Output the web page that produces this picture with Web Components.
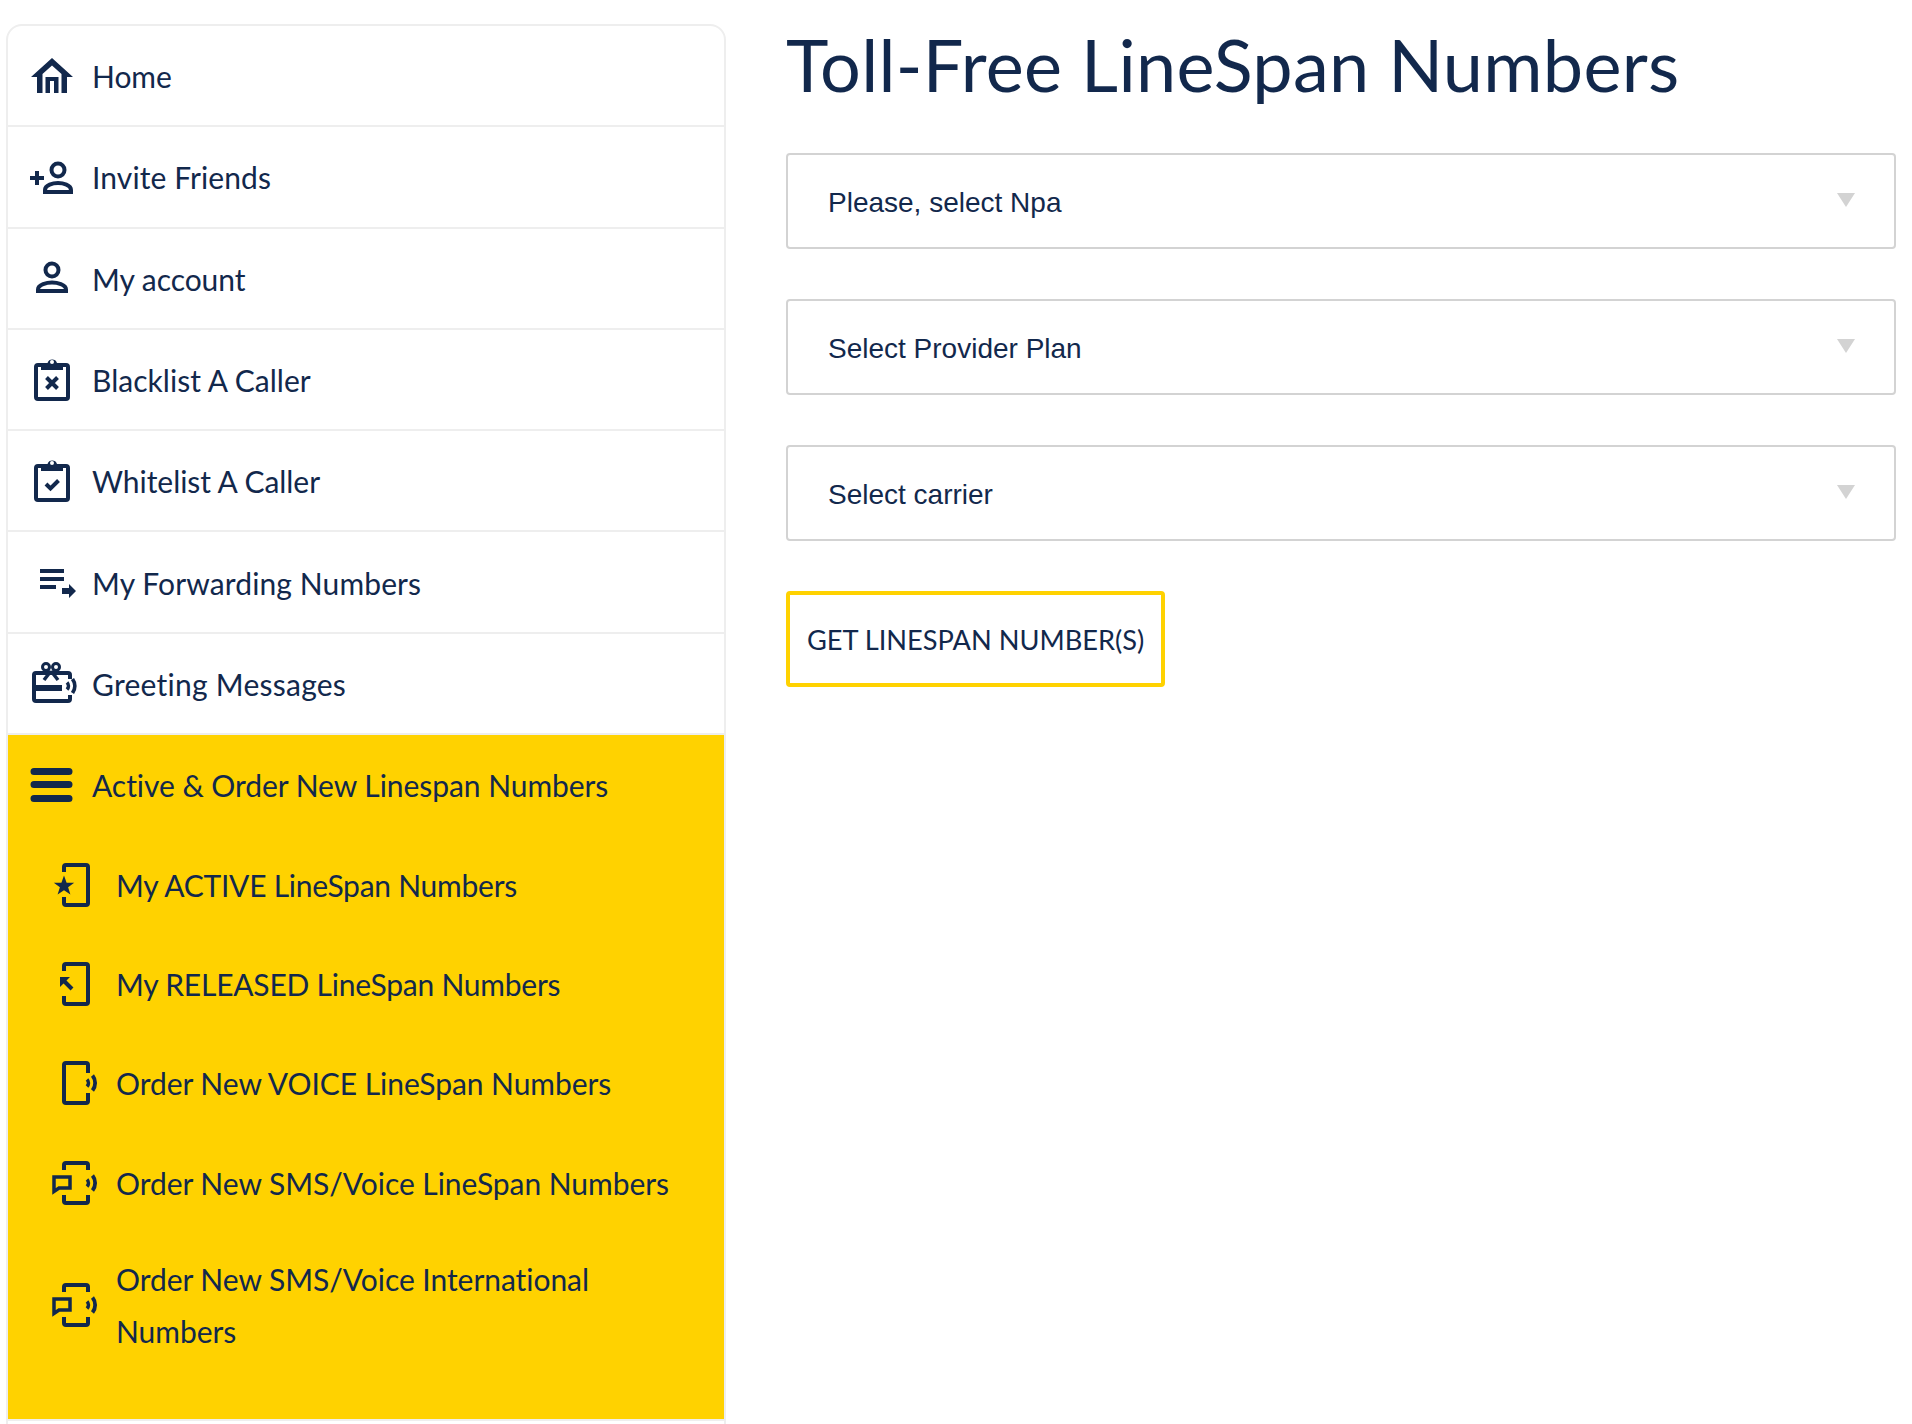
<!DOCTYPE html>
<html lang="en">
<head>
<meta charset="utf-8">
<title>Toll-Free LineSpan Numbers</title>
<style>
html, body { margin: 0; height: 1424px; overflow: hidden; background: #fff; }
body { font-family: Lato, "Open Sans", sans-serif; color: #12284c; }
</style>
</head>
<body>
<page-shell>
  <nav-menu slot="side">
    <nav-item icon="home">Home</nav-item>
    <nav-item icon="invite" style="--track: .1px">Invite Friends</nav-item>
    <nav-item icon="account">My account</nav-item>
    <nav-item icon="blacklist" style="--track: .03px">Blacklist A Caller</nav-item>
    <nav-item icon="whitelist">Whitelist A Caller</nav-item>
    <nav-item icon="forward" style="--track: .12px">My Forwarding Numbers</nav-item>
    <nav-item icon="greeting" style="--track: .25px">Greeting Messages</nav-item>
    <nav-group>
      <nav-item slot="head" icon="menu" plain>Active &amp; Order New Linespan Numbers</nav-item>
      <sub-item icon="active" style="--track: -.25px">My ACTIVE LineSpan Numbers</sub-item>
      <sub-item icon="released" style="--track: -.22px">My RELEASED LineSpan Numbers</sub-item>
      <sub-item icon="voice">Order New VOICE LineSpan Numbers</sub-item>
      <sub-item icon="sms">Order New SMS/Voice LineSpan Numbers</sub-item>
      <sub-item icon="sms" tall>Order New SMS/Voice International Numbers</sub-item>
    </nav-group>
  </nav-menu>
  <number-form>
    <span slot="title">Toll-Free LineSpan Numbers</span>
    <select-box>Please, select Npa</select-box>
    <select-box>Select Provider Plan</select-box>
    <select-box>Select carrier</select-box>
    <outline-button slot="action">GET LINESPAN NUMBER(S)</outline-button>
  </number-form>
</page-shell>

<script>
// all icons are drawn on a 48 x 48 box, 1 unit = 1 reference pixel
const tabletStubs = 'M14 11V6a2 2 0 0 1 2-2h20a2 2 0 0 1 2 2v36a2 2 0 0 1-2 2H16a2 2 0 0 1-2-2v-6';
const tabletVoice = 'M14 11V6a2 2 0 0 1 2-2h20a2 2 0 0 1 2 2v5M14 36v6a2 2 0 0 0 2 2h20a2 2 0 0 0 2-2v-6';
const waves = '<path d="M37 20.5a5 5 0 0 1 0 7" stroke-width="3.6"/><path d="M42.500 16.500a12 12 0 0 1 0 15" stroke-width="3.8"/>';
const clipboard = `<rect x="8" y="9" width="32" height="34" rx="2"/>
  <path fill="currentColor" stroke="none" d="M13 7h6.500a5 5 0 0 1 9.500 0H35v7H13z"/>
  <circle cx="24" cy="6" r="2" fill="#fff" stroke="none"/>`;
const icons = {
  home: '<path fill="currentColor" stroke="none" fill-rule="evenodd" d="M24 6L3 25h6v16h30V25h6zM24 13.500l-9.500 8.500v19h3V25h13v16h3V22zM22 29h4v12h-4z"/>',
  invite: '<path d="M2 25h14M9 18v14" /><circle cx="30" cy="17" r="6.500"/><path d="M17 39v-2c0-5 8-7 13-7s13 2 13 7v2z"/>',
  account: '<circle cx="24" cy="16" r="6.500"/><path d="M10 37v-1.500c0-5 9-7 14-7s14 2 14 7V37z"/>',
  blacklist: clipboard + '<path d="M18.500 21.500l11 11M29.500 21.500l-11 11"/>',
  whitelist: clipboard + '<path d="M18 27l4.500 4.500L30.500 23.500"/>',
  forward: '<path fill="currentColor" stroke="none" d="M12 11h24v4H12zM12 19h24v4H12zM12 27h16v4H12zM34 30h7v-4l7 7-7 7v-4h-7z"/>',
  greeting: `<path d="M42 20v-4a2 2 0 0 0-2-2H8a2 2 0 0 0-2 2v24a2 2 0 0 0 2 2h32a2 2 0 0 0 2-2v-4"/>
    <path fill="currentColor" stroke="none" d="M4 26h30v6H4z"/>
    <path d="M23 12l-7 9M23 12l7 9" stroke-width="3.500"/>
    <circle cx="18" cy="8" r="3.500" stroke-width="3"/><circle cx="28" cy="8" r="3.500" stroke-width="3"/>
    <path d="M39 23.500a5 5 0 0 1 0 7" stroke-width="3.600"/><path d="M44.500 20a12 12 0 0 1 0 14" stroke-width="3.800"/>`,
  menu: '<path fill="currentColor" stroke="none" d="M6 7h35a2 2 0 0 1 0 7H6a2 2 0 0 1 0-7zM6 20h35a2 2 0 0 1 0 7H6a2 2 0 0 1 0-7zM6 34h35a2 2 0 0 1 0 7H6a2 2 0 0 1 0-7z"/>',
  active: `<path d="${tabletStubs}"/><path fill="currentColor" stroke="none" d="M14 14.500l2.600 7.200h7.600l-6.100 4.600 2.300 7.300-6.400-4.400-6.400 4.400 2.300-7.300-6.100-4.600h7.600z"/>`,
  released: `<path d="${tabletStubs}"/><path fill="currentColor" stroke="none" d="M10 17h10L10 27z"/><path d="M14 21l8 8"/>`,
  voice: `<path d="M38 14V6a2 2 0 0 0-2-2H16a2 2 0 0 0-2 2v36a2 2 0 0 0 2 2h20a2 2 0 0 0 2-2v-8"/>${waves}`,
  sms: `<path d="${tabletVoice}"/><path stroke-width="3.500" d="M4 18h16v11H9l-5 3.500z"/>${waves}`
};

class LsIcon extends HTMLElement {
  constructor() {
    super();
    this.attachShadow({ mode: 'open' });
    this.shadowRoot.innerHTML = `<style>
      :host { display: block; width: 48px; height: 48px; flex: none; color: #12284c; }
      svg { display: block; width: 48px; height: 48px; overflow: visible; fill: none; stroke: currentColor; stroke-width: 4; }
    </style>
    <svg viewBox="0 0 48 48" aria-hidden="true">${icons[this.getAttribute('name')] || ''}</svg>`;
  }
}

const navTemplate = document.createElement('template');
navTemplate.innerHTML = `
<style>
  :host {
    display: flex;
    align-items: center;
    gap: 16px;
    height: 99.300px;
    padding-left: 20px;
    border-top: 2px solid #eee;
    font-size: 30px;
    letter-spacing: var(--track, -0.05px);
  }
  :host(:first-child) { border-top: 0; }
  :host([plain]) { border-top: 0; height: 100px; }
  span { padding-top: 1px; }
  :host([plain]) span { padding-top: 0; }
</style>
<ls-icon></ls-icon>
<span><slot></slot></span>
`;

class NavItem extends HTMLElement {
  constructor() {
    super();
    this.attachShadow({ mode: 'open' });
    const content = navTemplate.content.cloneNode(true);
    // the icon reads its name when it is upgraded, so set it before appending
    content.querySelector('ls-icon').setAttribute('name', this.getAttribute('icon'));
    this.shadowRoot.appendChild(content);
  }
}

const subTemplate = document.createElement('template');
subTemplate.innerHTML = `
<style>
  :host {
    display: flex;
    align-items: center;
    gap: 18px;
    height: 99.300px;
    padding-left: 42px;
    font-size: 30px;
    letter-spacing: var(--track, -0.05px);
    line-height: 52px;
  }
  :host([tall]) { height: 145px; }
  :host([tall]) span { max-width: 510px; }
</style>
<ls-icon></ls-icon>
<span><slot></slot></span>
`;

class SubItem extends HTMLElement {
  constructor() {
    super();
    this.attachShadow({ mode: 'open' });
    const content = subTemplate.content.cloneNode(true);
    content.querySelector('ls-icon').setAttribute('name', this.getAttribute('icon'));
    this.shadowRoot.appendChild(content);
  }
}

class NavGroup extends HTMLElement {
  constructor() {
    super();
    this.attachShadow({ mode: 'open' });
    this.shadowRoot.innerHTML = `<style>
      :host { display: block; background: #ffd200; border-top: 2px solid #eee; padding-bottom: 42px; border-bottom: 2px solid #eee; }
    </style><slot name="head"></slot><slot></slot>`;
  }
}

class NavMenu extends HTMLElement {
  constructor() {
    super();
    this.attachShadow({ mode: 'open' });
    this.shadowRoot.innerHTML = `<style>
      :host {
        display: block;
        border: 2px solid #eee;
        border-radius: 16px 16px 0 0;
        padding-bottom: 60px;
      }
    </style><slot></slot>`;
  }
}

class SelectBox extends HTMLElement {
  constructor() {
    super();
    this.attachShadow({ mode: 'open' });
    this.shadowRoot.innerHTML = `<style>
      :host {
        display: flex;
        align-items: center;
        justify-content: space-between;
        box-sizing: border-box;
        height: 96px;
        padding: 4px 39px 0 40px;
        border: 2px solid #d3d3d3;
        border-radius: 4px;
        font: 28px "Liberation Sans", Arial, sans-serif;
        color: #12284c;
      }
      i { width: 0; height: 0; margin-top: -6px; border: solid transparent; border-width: 14px 9px 0; border-top-color: #d3d3d3; }
    </style><span><slot></slot></span><i></i>`;
  }
}

class OutlineButton extends HTMLElement {
  constructor() {
    super();
    this.attachShadow({ mode: 'open' });
    this.shadowRoot.innerHTML = `<style>
      :host {
        display: inline-flex;
        align-items: center;
        box-sizing: border-box;
        height: 96px;
        padding: 0 17px;
        border: 4px solid #ffd200;
        border-radius: 4px;
        font-size: 27.200px;
        color: #12284c;
        white-space: nowrap;
      }
    </style><slot></slot>`;
  }
}

class NumberForm extends HTMLElement {
  constructor() {
    super();
    this.attachShadow({ mode: 'open' });
    this.shadowRoot.innerHTML = `<style>
      :host { display: block; }
      h1 { margin: 0 0 48px; font-size: 72px; line-height: 81px; font-weight: 400; letter-spacing: 0.3px; color: #12284c; }
      .fields { display: flex; flex-direction: column; gap: 50px; }
      .action { display: flex; margin-top: 50px; }
    </style>
    <h1><slot name="title"></slot></h1>
    <div class="fields"><slot></slot></div>
    <div class="action"><slot name="action"></slot></div>`;
  }
}

class PageShell extends HTMLElement {
  constructor() {
    super();
    this.attachShadow({ mode: 'open' });
    this.shadowRoot.innerHTML = `<style>
      :host {
        display: grid;
        grid-template-columns: 720px 1fr;
        column-gap: 60px;
        padding: 24px 16px 0 6px;
        align-items: start;
      }
    </style><slot name="side"></slot><slot></slot>`;
  }
}

customElements.define('ls-icon', LsIcon);
customElements.define('nav-item', NavItem);
customElements.define('sub-item', SubItem);
customElements.define('nav-group', NavGroup);
customElements.define('nav-menu', NavMenu);
customElements.define('select-box', SelectBox);
customElements.define('outline-button', OutlineButton);
customElements.define('number-form', NumberForm);
customElements.define('page-shell', PageShell);
</script>
</body>
</html>
